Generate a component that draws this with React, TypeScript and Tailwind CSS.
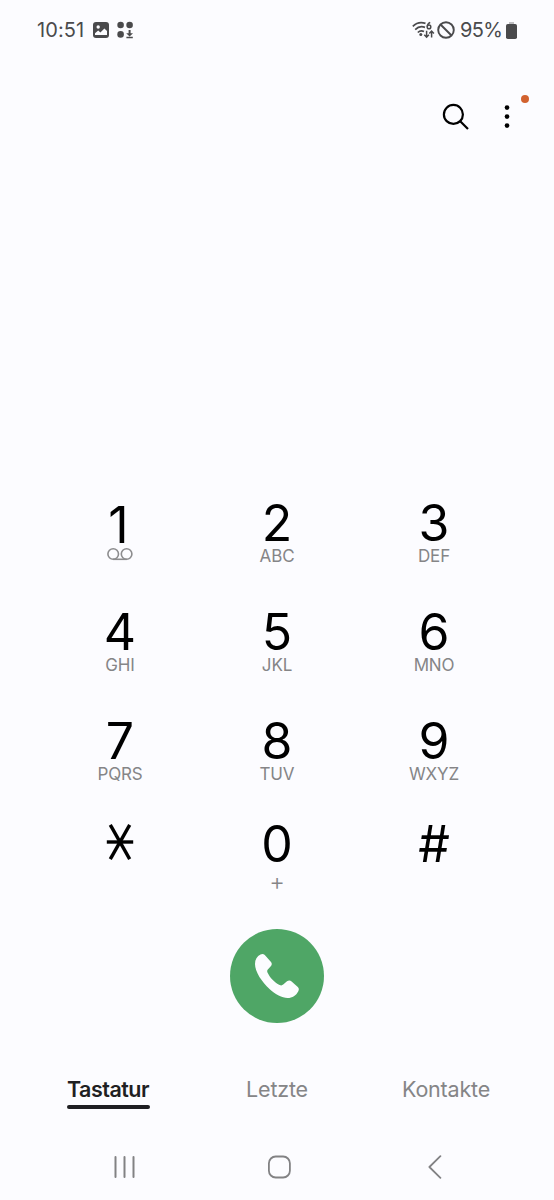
import React from "react";
import clsx from "clsx";

const KEYS = [
    { digit: "1", icon: "voicemail" },
    { digit: "2", letters: "ABC" },
    { digit: "3", letters: "DEF" },
    { digit: "4", letters: "GHI" },
    { digit: "5", letters: "JKL" },
    { digit: "6", letters: "MNO" },
    { digit: "7", letters: "PQRS" },
    { digit: "8", letters: "TUV" },
    { digit: "9", letters: "WXYZ" },
    { digit: "*" },
    { digit: "0", letters: "+" },
    { digit: "#" },
];

const TABS = ["Tastatur", "Letzte", "Kontakte"];

function StatusBar() {
    return (
        <header className="flex h-[60px] items-center justify-between pr-[37px] pl-[37px] text-[#4a4a4c]">
            <div className="flex items-center">
                <span className="w-[47px] text-[20px] leading-6 tracking-[0.1px] whitespace-nowrap">10:51</span>
                <svg className="ml-[9px]" width="16" height="16" viewBox="0 0 16 16">
                    <rect width="16" height="16" rx="3" fill="currentColor" />
                    <circle cx="5.2" cy="5" r="1.7" fill="#fcfcff" />
                    <path d="M2 13V11.2L5.2 8.6L7.4 10.6L11.4 6.4L14 9V13Z" fill="#fcfcff" />
                </svg>
                <svg className="ml-[8px]" width="17" height="18" viewBox="0 0 17 18" fill="currentColor">
                    <circle cx="3.6" cy="4" r="3.3" />
                    <circle cx="12.6" cy="4" r="3.3" />
                    <circle cx="3.6" cy="13.4" r="3.3" />
                    <path d="M11.6 9H13.6V12.3H16L12.6 15.4L9.2 12.3H11.6ZM9.4 15.7H15.8V17.2H9.4Z" />
                </svg>
            </div>
            <div className="flex items-center">
                <svg width="23" height="20" viewBox="0 0 23 20" fill="none" stroke="currentColor" strokeWidth="1.7">
                    <path d="M0.8 6.3C4.2 3 9 1.9 13.5 3.4" />
                    <path d="M3.2 9.6C6 6.8 9.8 6.1 13 7.4" />
                    <path d="M5.8 12.5C7.6 10.8 10 10.5 12 11.6" />
                    <circle cx="8.8" cy="14.4" r="1.5" fill="currentColor" stroke="none" />
                    <path d="M18.2 2.4C16.4 3.2 15.3 4.8 15.3 6.5" strokeWidth="1.5" />
                    <circle cx="17" cy="6.9" r="1.8" strokeWidth="1.5" />
                    <path d="M14.6 10.8V17M12.3 14.8L14.6 17.2L16.9 14.8M19.6 17.4V11.2M17.3 13.4L19.6 11L21.9 13.4" strokeWidth="1.5" />
                </svg>
                <svg className="ml-[2px]" width="18" height="18" viewBox="0 0 18 18" fill="none" stroke="currentColor" strokeWidth="1.9">
                    <circle cx="9" cy="9" r="7.8" />
                    <path d="M3.5 3.5L14.5 14.5" />
                </svg>
                <span className="ml-[5px] w-[43px] text-[20px] leading-6 tracking-[-0.6px] whitespace-nowrap">95%</span>
                <svg className="ml-[3px]" width="11" height="17" viewBox="0 0 11 17" fill="currentColor">
                    <rect x="3" width="5" height="2.5" opacity="0.35" />
                    <rect y="2" width="11" height="15" rx="1.8" />
                </svg>
            </div>
        </header>
    );
}

function Toolbar() {
    return (
        <div className="flex h-[114px] items-center justify-end pr-[35px] text-black">
            <button aria-label="Suchen">
                <svg width="28" height="28" viewBox="0 0 28 28" fill="none" stroke="currentColor" strokeWidth="2.2">
                    <circle cx="11.4" cy="11.4" r="9.5" />
                    <path d="M18.2 18.2L26 26" />
                </svg>
            </button>
            <button aria-label="Weitere Optionen" className="relative ml-[25px] w-6">
                <svg className="mx-auto" width="6" height="24" viewBox="0 0 6 24" fill="currentColor">
                    <circle cx="3" cy="2.6" r="2.3" />
                    <circle cx="3" cy="11.6" r="2.3" />
                    <circle cx="3" cy="20.6" r="2.3" />
                </svg>
                <span className="absolute -top-[10px] -right-[10px] size-[8px] rounded-full bg-[#d2622f]" />
            </button>
        </div>
    );
}

function StarIcon() {
    return (
        <svg className="mt-[3px]" width="28" height="38" viewBox="0 0 28 38" stroke="currentColor" strokeWidth="3.4">
            <line x1="0.8" y1="19" x2="27.2" y2="19" />
            <line x1="4.3" y1="1.8" x2="23.7" y2="36.2" />
            <line x1="23.7" y1="1.8" x2="4.3" y2="36.2" />
        </svg>
    );
}

function VoicemailIcon() {
    return (
        <svg width="26" height="14" viewBox="0 0 26 14" fill="none" stroke="currentColor" strokeWidth="1.6">
            <circle cx="6.2" cy="7" r="5.3" />
            <circle cx="19.6" cy="7" r="5.3" />
            <path d="M6 12.3H19.8" />
        </svg>
    );
}

function Key({ digit, letters, icon }: { digit: string; letters?: string; icon?: string }) {
    return (
        <button className="flex flex-col items-center">
            {digit === "*" ? (
                <StarIcon />
            ) : (
                <span className={clsx("h-[48px] text-[50px] leading-[48px] text-black", digit === "1" && "pt-[2px] pr-[3px]")}>{digit}</span>
            )}
            {icon === "voicemail" && (
                <span className="text-[#8c8c8e]">
                    <VoicemailIcon />
                </span>
            )}
            {letters && (
                <span
                    className={clsx(
                        "text-[#858587]",
                        letters === "+" ? "mt-[4px] text-[24px] leading-5 font-light" : "text-[17px] leading-[19px] tracking-[-0.15px]"
                    )}
                >
                    {letters}
                </span>
            )}
        </button>
    );
}

export default function App() {
    return (
        <div className="flex h-[1200px] w-[554px] flex-col bg-[#fcfcff] font-[Inter,sans-serif]">
            <StatusBar />
            <Toolbar />

            <main className="mt-[325px] grid grid-cols-[157px_157px_157px] grid-rows-[109px_109px_103px_109px] justify-center">
                {KEYS.map((key) => (
                    <Key key={key.digit} {...key} />
                ))}
            </main>

            <div className="flex justify-center">
                <button aria-label="Anrufen" className="flex size-[94px] items-center justify-center rounded-full bg-[#4fa666]">
                    <svg width="46" height="46" viewBox="0 0 46 46" fill="#fcfcff">
                        <path d="M6.5 1.5C8 0.6 9.5 0.8 10.8 2L17 9C18 10.2 18 11.6 17 13L13.8 16.6C13 17.6 13 18.6 13.6 19.8C16 24.8 20.5 29.5 25.6 32C27 32.6 28.2 32.5 29.2 31.6L33 28.3C34.5 27.2 36.2 27.2 37.6 28.4L43.8 34C45 35.2 45.2 36.6 44.3 38.2C42 42.5 38.5 45 33.5 45C28 45 21.5 41.5 15.5 36C8 29 1 19 1 11C1 6.5 3 3.2 6.5 1.5Z" />
                    </svg>
                </button>
            </div>

            <nav className="mt-[52px] grid grid-cols-[169px_169px_169px] justify-center">
                {TABS.map((tab, i) => (
                    <button key={tab} className="flex flex-col items-center">
                        <span
                            className={clsx(
                                "text-[21.5px] leading-7 whitespace-nowrap",
                                i === 0 ? "font-semibold tracking-[-0.5px] text-[#1f1f22]" : "tracking-[-0.2px] text-[#858587]"
                            )}
                        >
                            {tab}
                        </span>
                        {i === 0 && <span className="mt-[2px] h-[4px] w-[83px] rounded-full bg-[#1f1f22]" />}
                    </button>
                ))}
            </nav>

            <footer className="mt-auto flex h-[66px] items-center pl-[114px] text-[#828284]">
                <svg width="22" height="24" viewBox="0 0 22 24" stroke="currentColor" strokeWidth="2" strokeLinecap="round">
                    <path d="M1.5 2V22M10.5 2V22M19.5 2V22" />
                </svg>
                <svg className="ml-[131px]" width="24" height="24" viewBox="0 0 24 24" fill="none" stroke="currentColor" strokeWidth="1.8">
                    <rect x="1.9" y="1.5" width="21" height="21" rx="6.8" />
                </svg>
                <svg className="ml-[136px]" width="15" height="24" viewBox="0 0 15 24" fill="none" stroke="currentColor" strokeWidth="1.8" strokeLinecap="round" strokeLinejoin="round">
                    <path d="M13.4 1.2L2.4 12L13.4 22.8" />
                </svg>
            </footer>
        </div>
    );
}
